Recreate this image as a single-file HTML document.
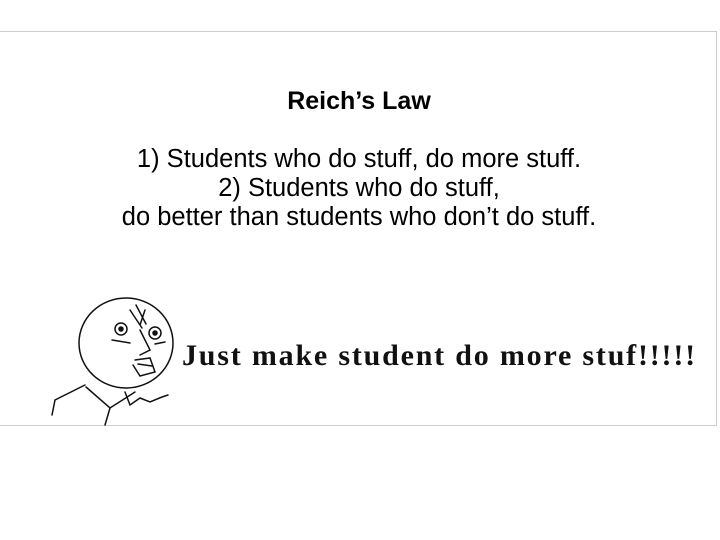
<html><body style="margin:0;width:720px;height:540px;background:#fff;position:relative;overflow:hidden">
<div style="position:absolute;left:-2px;top:31px;width:718px;height:393px;border:1px solid #ccc;border-left:none"></div>
<div style="position:absolute;left:0;width:718px;top:86px;text-align:center;font-family:'Liberation Sans',sans-serif;color:#000">
<div style="font-weight:bold;font-size:25px;line-height:30px">Reich’s Law</div>
<div style="margin-top:29px;line-height:29px;font-size:25.5px">1) Students who do stuff, do more stuff.<br>2) Students who do stuff,<br>do better than students who don’t do stuff.</div>
</div>
<svg style="position:absolute;left:0;top:280px" width="200" height="150" viewBox="0 0 200 150" fill="none" stroke="#111" stroke-width="1.5" stroke-linecap="round">
<ellipse cx="126" cy="63" rx="47" ry="45"/>
<path d="M85 105 L55 120 L52 135"/>
<path d="M86 107 L110 128 L135 112"/>
<path d="M110 128 L105 145"/>
<path d="M125 112 L130 125 L140 118 L150 122 L162 117 L168 115"/>
<circle cx="121" cy="49" r="6"/><circle cx="121" cy="49" r="2" fill="#111"/>
<circle cx="155" cy="53" r="6"/><circle cx="155" cy="53" r="2" fill="#111"/>
<path d="M130 30 L142 48 M136 25 L146 44 M145 30 L140 45"/>
<path d="M140 50 L150 70 L140 75 M135 80 L150 78 L155 92 L140 96 L133 85"/>
<path d="M138 84 L152 86"/>
<path d="M112 60 L130 63 M155 64 L165 62"/>
</svg>
<div style="position:absolute;left:182px;top:339px;font-family:'Liberation Serif',serif;font-weight:bold;font-size:30px;color:#111;letter-spacing:1.8px;white-space:nowrap">Just make student do more stuf!!!!!</div>
</body></html>
